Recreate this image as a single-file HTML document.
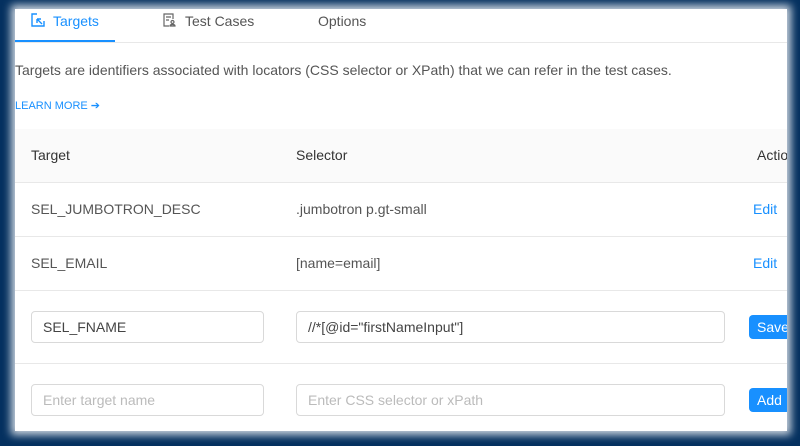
<!DOCTYPE html>
<html><head><style>
*{margin:0;padding:0;box-sizing:border-box}
body{width:800px;height:446px;background:#04305f;font-family:"Liberation Sans",sans-serif;position:relative;overflow:hidden}
#p{position:absolute;left:15px;top:9px;width:772px;height:422px;background:#fff;box-shadow:0 0 8px 4px rgba(255,255,255,.8);overflow:hidden}
.a{position:absolute;white-space:nowrap}
.tab{font-size:14px;color:#555;top:4px}
.hd{background:#fafafa}
.line{position:absolute;left:0;width:800px;height:1px;background:#e8e8e8}
.cell{font-size:14px;color:#555}
.inp{position:absolute;height:32px;border:1px solid #d9d9d9;border-radius:4px;font-size:14px;line-height:30px;padding-left:11px;color:#444}
.btn{position:absolute;background:#1890ff;color:#fff;font-size:14px;border-radius:4px;height:24px;line-height:24px;padding:0 8px}
</style></head><body>
<div id="p">
<svg class="a" style="left:16px;top:4px" width="14" height="14" viewBox="0 0 14 14" fill="none" stroke="#1890ff" stroke-width="1.4"><path d="M6 1H1v12h12V8"/><path d="M11 11L6 6M6 6v4M6 6h4"/></svg>
<div class="a tab" style="left:38px;color:#1890ff">Targets</div>
<svg class="a" style="left:148px;top:4px" width="13" height="14" viewBox="0 0 13 14" fill="none" stroke="#666" stroke-width="1.2"><path d="M10 6V1H1v12h5"/><path d="M3 4h5M3 7h3"/><circle cx="9.5" cy="9" r="1.5"/><path d="M7 13c0-2 5-2 5 0z"/></svg>
<div class="a tab" style="left:170px">Test Cases</div>
<div class="a tab" style="left:303px">Options</div>
<div class="a" style="left:0;top:31px;width:100px;height:2px;background:#1890ff"></div>
<div class="line" style="top:33px"></div>
<div class="a" style="left:0;top:53px;font-size:14px;color:#555">Targets are identifiers associated with locators (CSS selector or XPath) that we can refer in the test cases.</div>
<div class="a" style="left:0;top:90px;font-size:11px;color:#1890ff">LEARN MORE ➔</div>
<div class="a hd" style="left:0;top:120px;width:800px;height:53px"></div>
<div class="line" style="top:173px"></div>
<div class="a cell" style="left:16px;top:138px;color:#333">Target</div>
<div class="a cell" style="left:281px;top:138px;color:#333">Selector</div>
<div class="a cell" style="left:742px;top:138px;color:#333">Action</div>
<div class="a cell" style="left:16px;top:192px">SEL_JUMBOTRON_DESC</div>
<div class="a cell" style="left:281px;top:192px">.jumbotron p.gt-small</div>
<div class="a cell" style="left:738px;top:192px;color:#1890ff">Edit</div>
<div class="line" style="top:227px"></div>
<div class="a cell" style="left:16px;top:246px">SEL_EMAIL</div>
<div class="a cell" style="left:281px;top:246px">[name=email]</div>
<div class="a cell" style="left:738px;top:246px;color:#1890ff">Edit</div>
<div class="line" style="top:281px"></div>
<div class="inp" style="left:16px;top:302px;width:233px">SEL_FNAME</div>
<div class="inp" style="left:281px;top:302px;width:429px">//*[@id="firstNameInput"]</div>
<div class="btn" style="left:734px;top:306px">Save</div>
<div class="line" style="top:354px"></div>
<div class="inp" style="left:16px;top:375px;width:233px;color:#bbb">Enter target name</div>
<div class="inp" style="left:281px;top:375px;width:429px;color:#bbb">Enter CSS selector or xPath</div>
<div class="btn" style="left:734px;top:379px">Add</div>
</div>
</body></html>
